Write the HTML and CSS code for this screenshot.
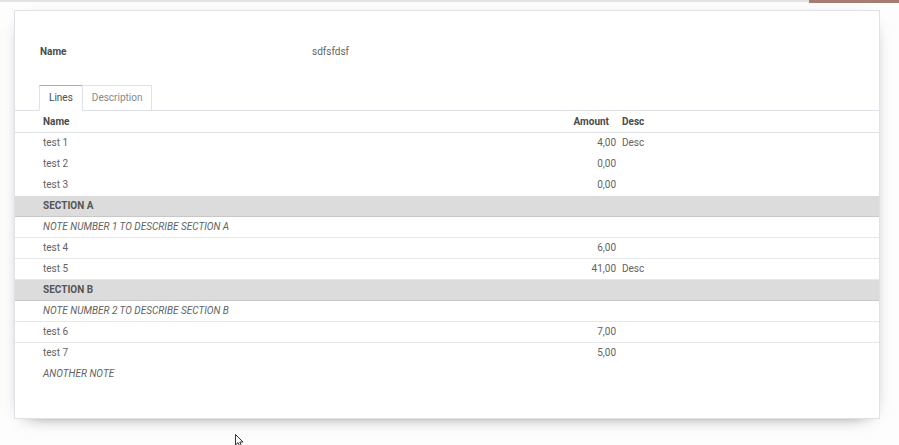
FILE: index.html
```html
<!DOCTYPE html>
<html lang="en">
<head>
  <meta charset="UTF-8" />
  <title>Lines form</title>
  <link rel="stylesheet" href="styles.css">
</head>
<body>

  <!-- Control panel edge -->
  <div class="topbar">
    <div class="topbar-line"></div>
    <div class="topbar-accent"></div>
  </div>

  <!-- Form sheet -->
  <div class="sheet">
    <div class="field-row">
      <span class="field-label">Name</span>
      <span class="field-value">sdfsfdsf</span>
    </div>

    <ul class="tabs">
      <li class="tab active">Lines</li>
      <li class="tab">Description</li>
    </ul>

    <table class="lines">
      <colgroup>
        <col />
        <col class="w-amount" />
        <col class="w-desc" />
      </colgroup>
      <thead>
        <tr>
          <th class="col-name">Name</th>
          <th class="col-amount">Amount</th>
          <th class="col-desc">Desc</th>
        </tr>
      </thead>
      <tbody>
        <tr class="line plain">
          <td class="col-name">test 1</td><td class="col-amount">4,00</td><td class="col-desc">Desc</td>
        </tr>
        <tr class="line plain">
          <td class="col-name">test 2</td><td class="col-amount">0,00</td><td class="col-desc"></td>
        </tr>
        <tr class="line plain">
          <td class="col-name">test 3</td><td class="col-amount">0,00</td><td class="col-desc"></td>
        </tr>
        <tr class="section">
          <td class="col-name" colspan="3">SECTION A</td>
        </tr>
        <tr class="note">
          <td class="col-name" colspan="3">NOTE NUMBER 1 TO DESCRIBE SECTION A</td>
        </tr>
        <tr class="line">
          <td class="col-name">test 4</td><td class="col-amount">6,00</td><td class="col-desc"></td>
        </tr>
        <tr class="line">
          <td class="col-name">test 5</td><td class="col-amount">41,00</td><td class="col-desc">Desc</td>
        </tr>
        <tr class="section">
          <td class="col-name" colspan="3">SECTION B</td>
        </tr>
        <tr class="note">
          <td class="col-name" colspan="3">NOTE NUMBER 2 TO DESCRIBE SECTION B</td>
        </tr>
        <tr class="line">
          <td class="col-name">test 6</td><td class="col-amount">7,00</td><td class="col-desc"></td>
        </tr>
        <tr class="line plain">
          <td class="col-name">test 7</td><td class="col-amount">5,00</td><td class="col-desc"></td>
        </tr>
        <tr class="note plain">
          <td class="col-name" colspan="3">ANOTHER NOTE</td>
        </tr>
      </tbody>
    </table>
  </div>

  <!-- Mouse pointer -->
  <svg class="cursor" width="10" height="14" viewBox="0 0 10 14">
    <path d="M0.5 0.5 L0.5 11 L3 8.6 L4.9 12.8 L6.6 12 L4.8 8 L8 8 Z" fill="#fff" stroke="#333" stroke-width="1" />
  </svg>

</body>
</html>
```

FILE: styles.css
```css
:root {
  --border: #dee2e6;
  --row-border: #e6e8eb;
  --section-bg: #dcdcdc;
  --section-border: #c8c8c8;
  --text: #636363;
  --text-strong: #4a4a4a;
  --accent: #a57c71;
}

body {
  margin: 0;
  font-family: Roboto, 'Liberation Sans', sans-serif;
  font-size: 10px;
  color: var(--text);
  background: #fdfdfd;
  position: relative;
  height: 445px;
  overflow: hidden;
}

.topbar {
  display: flex;
  height: 3px;
}

.topbar-line {
  flex: 1;
  height: 2px;
  background: #e3e3e3;
}

.topbar-accent {
  width: 90px;
  height: 3px;
  background: var(--accent);
}

.sheet {
  margin: 7px 0 0 14px;
  width: 866px;
  min-height: 409px;
  box-sizing: border-box;
  border: 1px solid var(--border);
  background: #ffffff;
  box-shadow: 0 5px 18px -13px #000;
}

.field-row {
  display: flex;
  padding: 34px 0 0 25px;
  line-height: 14px;
}

.field-label {
  width: 272px;
  font-weight: bold;
  color: var(--text-strong);
}

.tabs {
  display: flex;
  list-style: none;
  margin: 26px 0 0;
  padding: 0 0 0 24px;
  border-bottom: 1px solid var(--border);
}

.tab {
  padding: 5px 9px;
  line-height: 14px;
  border: 1px solid var(--border);
  margin-bottom: -1px;
  color: #888888;
}

.tab + .tab {
  margin-left: -1px;
}

.tab.active {
  color: var(--text-strong);
  border-top-color: #b1a6ba;
  border-bottom-color: #ffffff;
}

.lines {
  width: 100%;
  border-collapse: collapse;
  table-layout: fixed;
}

.w-amount {
  width: 118px;
}

.w-desc {
  width: 261px;
}

.lines th,
.lines td {
  padding: 3px 2px 3px 4px;
  line-height: 14px;
  text-align: left;
  white-space: nowrap;
  border-bottom: 1px solid var(--row-border);
}

.lines th {
  font-weight: bold;
  color: var(--text-strong);
  padding-top: 4px;
  padding-bottom: 3px;
  border-bottom-color: var(--border);
}

.lines .col-name {
  padding-left: 28px;
}

.lines .col-amount {
  text-align: right;
}

.lines th.col-amount {
  padding-right: 9px;
}

.lines .plain td {
  border-bottom-color: #ffffff;
}

.section td {
  background: var(--section-bg);
  font-weight: bold;
  color: #555555;
  border-top: 1px solid var(--section-border);
  border-bottom: 1px solid var(--section-border);
}

.note td {
  font-style: italic;
}

.cursor {
  position: absolute;
  left: 235px;
  top: 434px;
}
```
